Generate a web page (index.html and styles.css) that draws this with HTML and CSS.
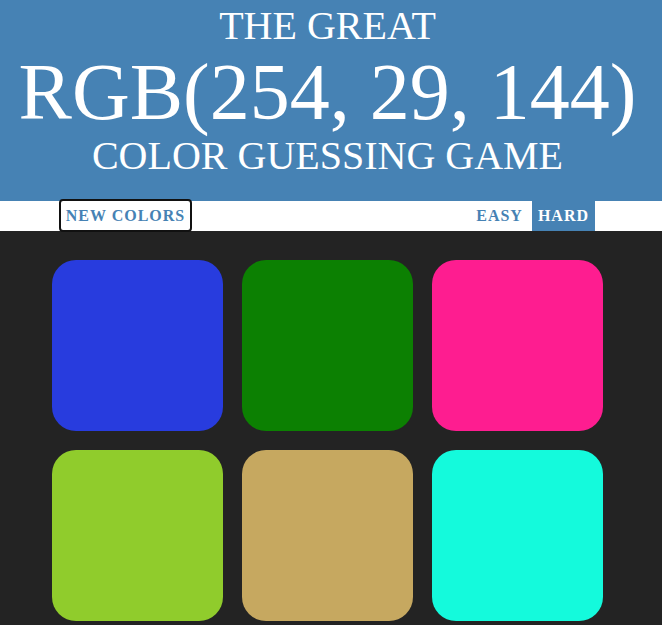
FILE: index.html
```html
<!DOCTYPE html>
<html>
<head>
<meta charset="utf-8">
<link rel="stylesheet" href="styles.css">
</head>
<body>
<h1 class="title">
  <span class="line-small">The Great</span>
  <span class="line-big">RGB(254, 29, 144)</span>
  <span class="line-small">Color Guessing Game</span>
</h1>
<div class="stripe">
  <button class="btn btn-reset">New Colors</button>
  <div class="modes">
    <button class="btn btn-easy">Easy</button>
    <button class="btn selected">Hard</button>
  </div>
</div>
<div class="board">
  <div class="square sq1"></div>
  <div class="square sq2"></div>
  <div class="square sq3"></div>
  <div class="square sq4"></div>
  <div class="square sq5"></div>
  <div class="square sq6"></div>
</div>
</body>
</html>
```
FILE: styles.css
```css
html, body {
  margin: 0;
  padding: 0;
  background: #232323;
  font-family: "Liberation Serif", "Times New Roman", serif;
}
.title {
  margin: 0;
  background: #4682b4;
  color: #fff;
  text-align: center;
  font-weight: normal;
  text-transform: uppercase;
  height: 201px;
  box-sizing: border-box;
  padding: 2px 7px 0 0;
}
.line-small {
  display: block;
  font-size: 40px;
  line-height: 48px;
}
.line-big {
  display: block;
  font-size: 80px;
  line-height: 92px;
  margin-top: -4px;
  margin-bottom: -6px;
}
.stripe {
  background: #fff;
  height: 30px;
  display: flex;
  align-items: stretch;
  padding: 0 67px 0 59px;
}
.btn {
  border: none;
  background: #fff;
  color: #4682b4;
  font-family: "Liberation Serif", "Times New Roman", serif;
  font-weight: bold;
  font-size: 16px;
  letter-spacing: 1px;
  text-transform: uppercase;
  white-space: nowrap;
  padding: 0 6px;
  height: 30px;
  margin: 0;
}
.btn-reset {
  width: 133px;
  height: 33px;
  margin-top: -2px;
  padding: 0;
  border: 2px solid #111;
  border-radius: 4px;
  box-shadow: inset 0 0 0 1px #fff;
  outline: none;
}
.modes {
  margin-left: auto;
  display: flex;
}
.modes .btn {
  padding: 0 6px;
}
.modes .btn-easy {
  margin-right: 3px;
}
.selected {
  background: #4682b4;
  color: #fff;
}
.board {
  display: grid;
  grid-template-columns: repeat(3, 171px);
  grid-auto-rows: 171px;
  gap: 19px;
  padding: 29px 0 0 52px;
}
.square {
  border-radius: 24px;
}
.sq1 { background: rgb(40, 60, 222); }
.sq2 { background: rgb(12, 128, 2); }
.sq3 { background: rgb(254, 29, 144); }
.sq4 { background: rgb(144, 204, 44); }
.sq5 { background: rgb(198, 168, 96); }
.sq6 { background: rgb(20, 250, 220); }
```
